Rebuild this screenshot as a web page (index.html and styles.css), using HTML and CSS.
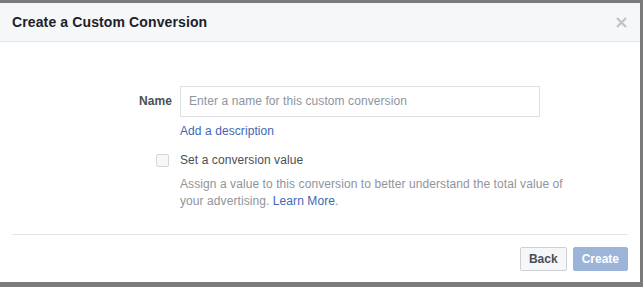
FILE: index.html
```html
<!DOCTYPE html>
<html>
<head>
<meta charset="utf-8">
<link rel="stylesheet" href="styles.css">
</head>
<body>
<div class="dialog">
  <div class="header">
    <h1 class="title">Create a Custom Conversion</h1>
    <svg class="close" width="11" height="11" viewBox="0 0 11 11"><path d="M1 1L10 10M10 1L1 10" stroke="#bec2c9" stroke-width="2.2" fill="none"/></svg>
  </div>
  <div class="body">
    <div class="form">
      <label class="label">Name</label>
      <div class="field">
        <div class="input">Enter a name for this custom conversion</div>
        <a class="link add">Add a description</a>
      </div>
      <div class="checkcell"><span class="checkbox"></span></div>
      <div class="field">
        <div class="checktext">Set a conversion value</div>
        <div class="desc">Assign a value to this conversion to better understand the total value of your advertising. <a class="link inline">Learn More</a>.</div>
      </div>
    </div>
  </div>
  <div class="footer">
    <button class="btn back">Back</button>
    <button class="btn create">Create</button>
  </div>
</div>
</body>
</html>
```
FILE: styles.css
```css
html, body {
  margin: 0;
  padding: 0;
}
body {
  background: #7b7b7b;
  width: 643px;
  height: 287px;
  overflow: hidden;
  font-family: "Liberation Sans", Arial, sans-serif;
  font-size: 12px;
  color: #4b4f56;
}
.dialog {
  margin-top: 3px;
  width: 640px;
  height: 279px;
  background: #fff;
  display: flex;
  flex-direction: column;
}
.header {
  height: 39px;
  box-sizing: border-box;
  background: #f6f7f9;
  border-bottom: 1px solid #e5e5e5;
  display: flex;
  align-items: center;
  justify-content: space-between;
  padding: 0 13px 0 12px;
}
.title {
  margin: 0;
  font-size: 14px;
  font-weight: bold;
  color: #1d2129;
  letter-spacing: 0.12px;
}
.close {
  display: block;
  margin-top: 1px;
}
.body {
  flex: 1;
  padding-top: 44px;
  letter-spacing: 0.08px;
}
.form {
  display: grid;
  grid-template-columns: 172px auto;
  column-gap: 8px;
  row-gap: 13px;
}
.label {
  font-weight: bold;
  text-align: right;
  line-height: 31px;
  height: 31px;
}
.field {
  display: flex;
  flex-direction: column;
  align-items: flex-start;
}
.input {
  width: 360px;
  height: 31px;
  box-sizing: border-box;
  border: 1px solid #dddfe2;
  padding: 0 8px;
  line-height: 29px;
  color: #90949c;
}
.link {
  color: #4267b2;
  text-decoration: none;
}
.add {
  margin-top: 6px;
  line-height: 16px;
}
.inline {
  line-height: inherit;
}
.checkcell {
  display: flex;
  justify-content: flex-end;
  padding-right: 3px;
  padding-top: 2px;
}
.checkbox {
  width: 13px;
  height: 13px;
  box-sizing: border-box;
  border: 1px solid #d3d6db;
  border-radius: 2px;
  background: #f6f7f9;
}
.checktext {
  line-height: 16px;
  color: #4b4f56;
}
.desc {
  width: 398px;
  margin-top: 8px;
  line-height: 17px;
  color: #90949c;
}
.footer {
  margin: 0 12px;
  border-top: 1px solid #e5e5e5;
  padding: 12px 0 12px;
  height: 48px;
  box-sizing: border-box;
  display: flex;
  justify-content: flex-end;
  gap: 6px;
}
.btn {
  height: 24px;
  box-sizing: border-box;
  padding: 0 8px;
  font-family: "Liberation Sans", Arial, sans-serif;
  font-size: 12px;
  font-weight: bold;
  border-radius: 2px;
  line-height: 22px;
}
.back {
  background: #f6f7f9;
  border: 1px solid #ced0d4;
  color: #4b4f56;
}
.create {
  background: #9cb4d8;
  border: 1px solid #9cb4d8;
  color: #fff;
}
```
